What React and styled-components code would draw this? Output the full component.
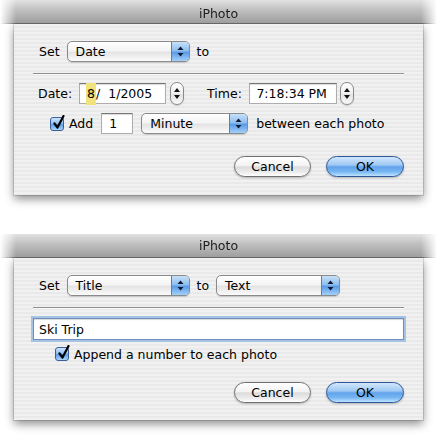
import React from 'react'
import styled, { createGlobalStyle, css } from 'styled-components'

const GlobalStyle = createGlobalStyle`
  html, body {
    margin: 0;
    padding: 0;
    background: #fff;
  }
  body {
    font-family: "DejaVu Sans", "Liberation Sans", sans-serif;
    font-size: 12.5px;
    color: #000;
  }
`

const Page = styled.div`
  width: 437px;
  height: 442px;
  overflow: hidden;
  display: flex;
  flex-direction: column;
`

const Dialog = styled.section`
  display: flex;
  flex-direction: column;
  margin-top: ${(p) => p.$top}px;
`

const TitleBar = styled.div`
  height: 24px;
  border-bottom: 1px solid #666;
  background: linear-gradient(#e2e2e2, #c2c2c2 40%, #9e9e9e);
  display: flex;
  align-items: center;
  justify-content: center;
  color: #1c1c1c;
  font-size: 12.5px;
  padding-top: ${(p) => p.$offset || 0}px;
  box-sizing: border-box;
  mask-image: linear-gradient(to right, transparent, #000 16px, #000 calc(100% - 16px), transparent);
`

const Sheet = styled.div`
  margin: 0 14px;
  height: ${(p) => p.$h}px;
  box-sizing: border-box;
  padding: 17px 19px 0 19px;
  background: repeating-linear-gradient(#f1f1f1 0, #f1f1f1 2px, #e9e9e9 2px, #e9e9e9 4px);
  box-shadow: 0 0 0 1px rgba(0, 0, 0, 0.12), 0 4px 9px rgba(0, 0, 0, 0.45);
  display: flex;
  flex-direction: column;
`

const Row = styled.div`
  display: flex;
  align-items: center;
  gap: ${(p) => p.$gap ?? 7}px;
  height: ${(p) => p.$h || 21}px;
  margin-top: ${(p) => p.$mt || 0}px;
  padding-left: ${(p) => p.$indent || 0}px;
`

const Label = styled.span`
  white-space: pre;
  margin-left: ${(p) => p.$ml || 0}px;
`

const Separator = styled.hr`
  margin: 11px 0 0 0;
  height: 0;
  border: none;
  border-top: 1px solid #8e8e8e;
  border-bottom: 1px solid #fafafa;
`

const Popup = styled.div`
  width: ${(p) => p.$w}px;
  height: 21px;
  box-sizing: border-box;
  border: 1px solid #8a8a8a;
  border-radius: 5px;
  background: linear-gradient(#ffffff, #f4f4f4 45%, #e4e4e4 55%, #fbfbfb);
  box-shadow: 0 1px 1px rgba(0, 0, 0, 0.15);
  display: flex;
  align-items: center;
  overflow: hidden;
`

const PopupText = styled.span`
  flex: 1;
  padding-left: 8px;
`

const PopupArrows = styled.div`
  width: 17px;
  align-self: stretch;
  border-left: 1px solid #5d7fae;
  background: linear-gradient(#c7e0f9, #8fbfef 45%, #5b9be6 55%, #a3d0fa);
  display: flex;
  align-items: center;
  justify-content: center;
`

const FieldGroup = styled.div`
  display: flex;
  align-items: center;
  gap: ${(p) => p.$gap ?? 4}px;
`

const Field = styled.div`
  width: ${(p) => p.$w}px;
  height: ${(p) => p.$h || 21}px;
  box-sizing: border-box;
  background: #fff;
  border: 1px solid #adadad;
  border-top-color: #777;
  box-shadow: inset 0 1px 1px rgba(0, 0, 0, 0.15);
  display: flex;
  align-items: center;
  justify-content: ${(p) => p.$align || 'flex-start'};
  padding: 0 ${(p) => p.$pr ?? 6}px 0 ${(p) => p.$pl ?? 6}px;
  white-space: pre;
  ${(p) =>
    p.$focus &&
    css`
      border: 1px solid #6f8fb9;
      box-shadow: 0 0 0 2px #a6c3e6, inset 0 1px 1px rgba(0, 0, 0, 0.15);
    `}
`

const Highlight = styled.span`
  background: #f1e27c;
  padding: 3px 1px 4px 1px;
`

const Stepper = styled.div`
  width: 14px;
  height: 23px;
  box-sizing: border-box;
  border: 1px solid #8a8a8a;
  border-radius: 7px;
  background: linear-gradient(#ffffff, #efefef 50%, #e0e0e0 51%, #fafafa);
  box-shadow: 0 1px 1px rgba(0, 0, 0, 0.15);
  display: flex;
  flex-direction: column;
  align-items: center;
  justify-content: space-around;
  padding: 3px 0;
`

const CheckLabel = styled.label`
  display: flex;
  align-items: center;
  gap: 5px;
`

const CheckBox = styled.span`
  position: relative;
  width: 14px;
  height: 14px;
  box-sizing: border-box;
  border: 1px solid #3c5f99;
  border-radius: 3px;
  background: linear-gradient(#cfe5fb, #8ec0f0 45%, #5c9de7 55%, #a9d5fb);
  svg {
    position: absolute;
    left: 1px;
    top: -3px;
  }
`

const ButtonRow = styled.div`
  display: flex;
  justify-content: flex-end;
  gap: 15px;
  margin-top: ${(p) => p.$mt}px;
`

const Button = styled.button`
  width: ${(p) => p.$w}px;
  height: 21px;
  border-radius: 11px;
  font: inherit;
  color: #000;
  padding: 0;
  border: 1px solid #6f6f6f;
  background: linear-gradient(#ffffff, #f3f3f3 45%, #dcdcdc 52%, #ececec 80%, #ffffff);
  box-shadow: 0 1px 2px rgba(0, 0, 0, 0.25);
  ${(p) =>
    p.$primary &&
    css`
      border-color: #2e5797;
      background: linear-gradient(#d2e6fb, #9ec9f4 42%, #62a2ea 52%, #78b7f3 78%, #bfe3ff);
    `}
`

const UpDown = () => (
  <svg width="7" height="11" viewBox="0 0 7 11">
    <path d="M3.5 0.5 L6.5 4 L0.5 4 Z" fill="#111a33" />
    <path d="M3.5 10.5 L6.5 7 L0.5 7 Z" fill="#111a33" />
  </svg>
)

const Up = () => (
  <svg width="6" height="4" viewBox="0 0 6 4">
    <path d="M3 0 L6 4 L0 4 Z" fill="#111" />
  </svg>
)

const Down = () => (
  <svg width="6" height="4" viewBox="0 0 6 4">
    <path d="M3 4 L6 0 L0 0 Z" fill="#111" />
  </svg>
)

const PopupButton = ({ width, children }) => (
  <Popup $w={width}>
    <PopupText>{children}</PopupText>
    <PopupArrows>
      <UpDown />
    </PopupArrows>
  </Popup>
)

const Check = ({ children }) => (
  <CheckLabel>
    <CheckBox>
      <svg width="14" height="15" viewBox="0 0 14 15">
        <path d="M2.5 8.5 L5.5 12.5 L11.5 1" fill="none" stroke="#000" strokeWidth="2.2" strokeLinecap="round" strokeLinejoin="round" />
      </svg>
    </CheckBox>
    {children}
  </CheckLabel>
)

const Buttons = ({ mt }) => (
  <ButtonRow $mt={mt}>
    <Button $w={77}>Cancel</Button>
    <Button $w={78} $primary>OK</Button>
  </ButtonRow>
)

export default function App() {
  return (
    <Page>
      <GlobalStyle />
      <Dialog $top={0}>
        <TitleBar $offset={4}>iPhoto</TitleBar>
        <Sheet $h={171}>
          <Row $indent={6}>
            <Label>Set</Label>
            <PopupButton width={123}>Date</PopupButton>
            <Label>to</Label>
          </Row>
          <Separator />
          <Row $h={23} $mt={7} $indent={5}>
            <Label>Date:</Label>
            <FieldGroup>
              <Field $w={87} $pl={6} $pr={4}>
                <Highlight>8</Highlight>/{'  '}1/2005
              </Field>
              <Stepper>
                <Up />
                <Down />
              </Stepper>
            </FieldGroup>
            <Label $ml={16}>Time:</Label>
            <FieldGroup $gap={3}>
              <Field $w={88} $align="flex-end" $pr={9}>
                7:18:34 PM
              </Field>
              <Stepper>
                <Up />
                <Down />
              </Stepper>
            </FieldGroup>
          </Row>
          <Row $mt={8} $indent={17} $gap={8}>
            <Check>Add</Check>
            <Field $w={32} $pl={7}>1</Field>
            <PopupButton width={107}>Minute</PopupButton>
            <Label>between each photo</Label>
          </Row>
          <Buttons mt={22} />
        </Sheet>
      </Dialog>

      <Dialog $top={39}>
        <TitleBar>iPhoto</TitleBar>
        <Sheet $h={162}>
          <Row $indent={6}>
            <Label>Set</Label>
            <PopupButton width={123}>Title</PopupButton>
            <Label>to</Label>
            <PopupButton width={124}>Text</PopupButton>
          </Row>
          <Separator />
          <Row $h={22} $mt={9} $gap={0}>
            <Field $w={371} $h={22} $focus $pl={5}>
              Ski Trip
            </Field>
          </Row>
          <Row $h={16} $mt={6} $indent={22}>
            <Check>Append a number to each photo</Check>
          </Row>
          <Buttons mt={20} />
        </Sheet>
      </Dialog>
    </Page>
  )
}
